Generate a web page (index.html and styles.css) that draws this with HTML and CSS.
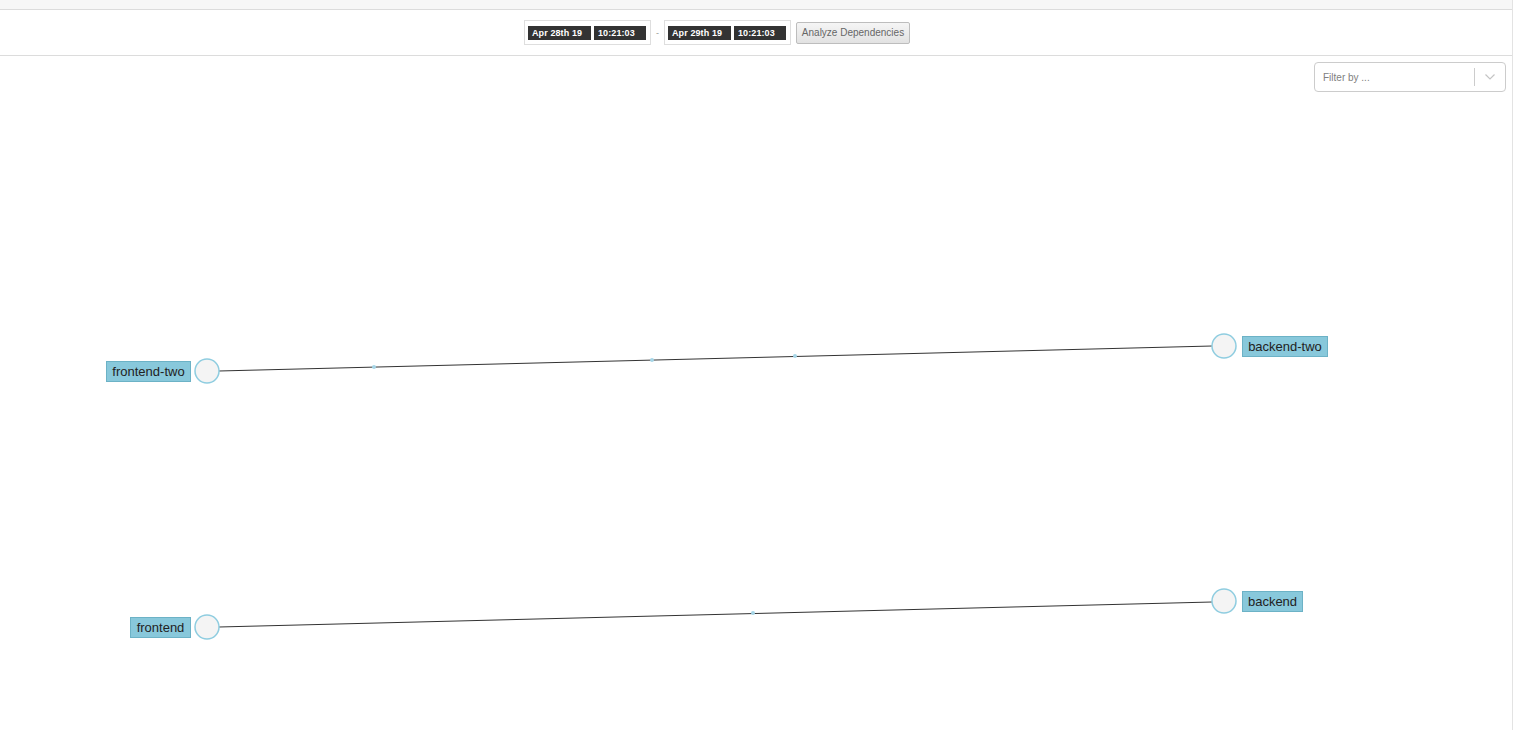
FILE: index.html
```html
<!DOCTYPE html>
<html>
<head>
<meta charset="utf-8">
<link rel="stylesheet" href="styles.css">
</head>
<body>
<div class="app">
  <div class="topstrip"></div>
  <div class="header">
    <div class="datebox">
      <span class="chip chip-date">Apr 28th 19</span>
      <span class="chip chip-time">10:21:03</span>
    </div>
    <span class="dash">-</span>
    <div class="datebox">
      <span class="chip chip-date">Apr 29th 19</span>
      <span class="chip chip-time">10:21:03</span>
    </div>
    <button class="analyze">Analyze Dependencies</button>
  </div>
  <div class="main">
    <div class="filter">
      <span class="filter-text">Filter by ...</span>
      <span class="filter-sep"></span>
      <svg class="filter-chev" width="12" height="8" viewBox="0 0 12 8"><path d="M1.5 1.5 L6 6 L10.5 1.5" fill="none" stroke="#c4c4c4" stroke-width="1.2"/></svg>
    </div>
    <svg class="graph" width="1512" height="674" viewBox="0 56 1512 674">
      <g class="edges">
        <line x1="219" y1="371" x2="1212" y2="346"/>
        <line x1="219" y1="627" x2="1212" y2="602"/>
      </g>
      <g class="dots">
        <circle cx="374" cy="367" r="2"/>
        <circle cx="652" cy="360" r="2"/>
        <circle cx="795" cy="356" r="2"/>
        <circle cx="753" cy="613" r="2"/>
      </g>
      <g class="nodes">
        <circle cx="207" cy="371" r="12"/>
        <circle cx="1224" cy="346" r="12"/>
        <circle cx="207" cy="627" r="12"/>
        <circle cx="1224" cy="601" r="12"/>
      </g>
      <g class="labels">
        <rect x="106.5" y="361.5" width="84" height="20"/>
        <text x="148.5" y="375.5">frontend-two</text>
        <rect x="1242.5" y="336.5" width="85" height="20"/>
        <text x="1285" y="350.5">backend-two</text>
        <rect x="130.5" y="617.5" width="60" height="20"/>
        <text x="160.5" y="631.5">frontend</text>
        <rect x="1242.5" y="591.5" width="60" height="20"/>
        <text x="1272.5" y="605.5">backend</text>
      </g>
    </svg>
  </div>
</div>
</body>
</html>
```
FILE: styles.css
```css
html, body {
  margin: 0;
  padding: 0;
  background: #fff;
  font-family: "Liberation Sans", Arial, sans-serif;
}
.app {
  width: 1512px;
  height: 730px;
  border-right: 1px solid #e3e3e3;
  box-sizing: content-box;
  display: flex;
  flex-direction: column;
  overflow: hidden;
}
.topstrip {
  height: 9px;
  background: #f7f7f7;
  border-bottom: 1px solid #dcdcdc;
  flex: none;
}
.header {
  height: 45px;
  border-bottom: 1px solid #dcdcdc;
  display: flex;
  align-items: center;
  padding-left: 524px;
  flex: none;
}
.datebox {
  height: 23px;
  border: 1px solid #dedede;
  padding: 0 4px 0 3px;
  display: flex;
  align-items: center;
  gap: 3px;
  box-sizing: content-box;
}
.chip {
  background: #333;
  color: #fff;
  font-size: 9px;
  font-weight: bold;
  height: 14px;
  line-height: 14px;
  padding: 0 4px;
  letter-spacing: 0.1px;
}
.chip-date { width: 55px; }
.chip-time { width: 44px; }
.dash {
  width: 13px;
  text-align: center;
  color: #999;
  font-size: 9px;
}
.analyze {
  margin-left: 5px;
  height: 22px;
  width: 114px;
  padding: 0;
  border: 1px solid #bdbdbd;
  border-radius: 2px;
  background: linear-gradient(#f5f5f5, #e2e2e2);
  color: #666;
  font-family: "Liberation Sans", Arial, sans-serif;
  font-size: 10px;
  margin-top: 0;
}
.main {
  position: relative;
  flex: 1;
}
.graph {
  display: block;
}
.filter {
  position: absolute;
  top: 6px;
  right: 6px;
  width: 192px;
  height: 30px;
  box-sizing: border-box;
  border: 1px solid #cccccc;
  border-radius: 4px;
  background: #fff;
  display: flex;
  align-items: center;
}
.filter-text {
  flex: 1;
  padding-left: 8px;
  font-size: 10px;
  color: #808080;
}
.filter-sep {
  width: 1px;
  height: 18px;
  background: #cccccc;
}
.filter-chev {
  margin: 0 9px 0 9px;
}
.edges line {
  stroke: #333;
  stroke-width: 1;
}
.dots circle {
  fill: #a6d6e8;
}
.nodes circle {
  fill: #f4f4f4;
  stroke: #8fcde0;
  stroke-width: 1.5;
}
.labels rect {
  fill: #88c8db;
  stroke: #6cb2c6;
  stroke-width: 1;
}
.labels text {
  font-family: "Liberation Sans", Arial, sans-serif;
  font-size: 13px;
  fill: #222;
  text-anchor: middle;
}
```
